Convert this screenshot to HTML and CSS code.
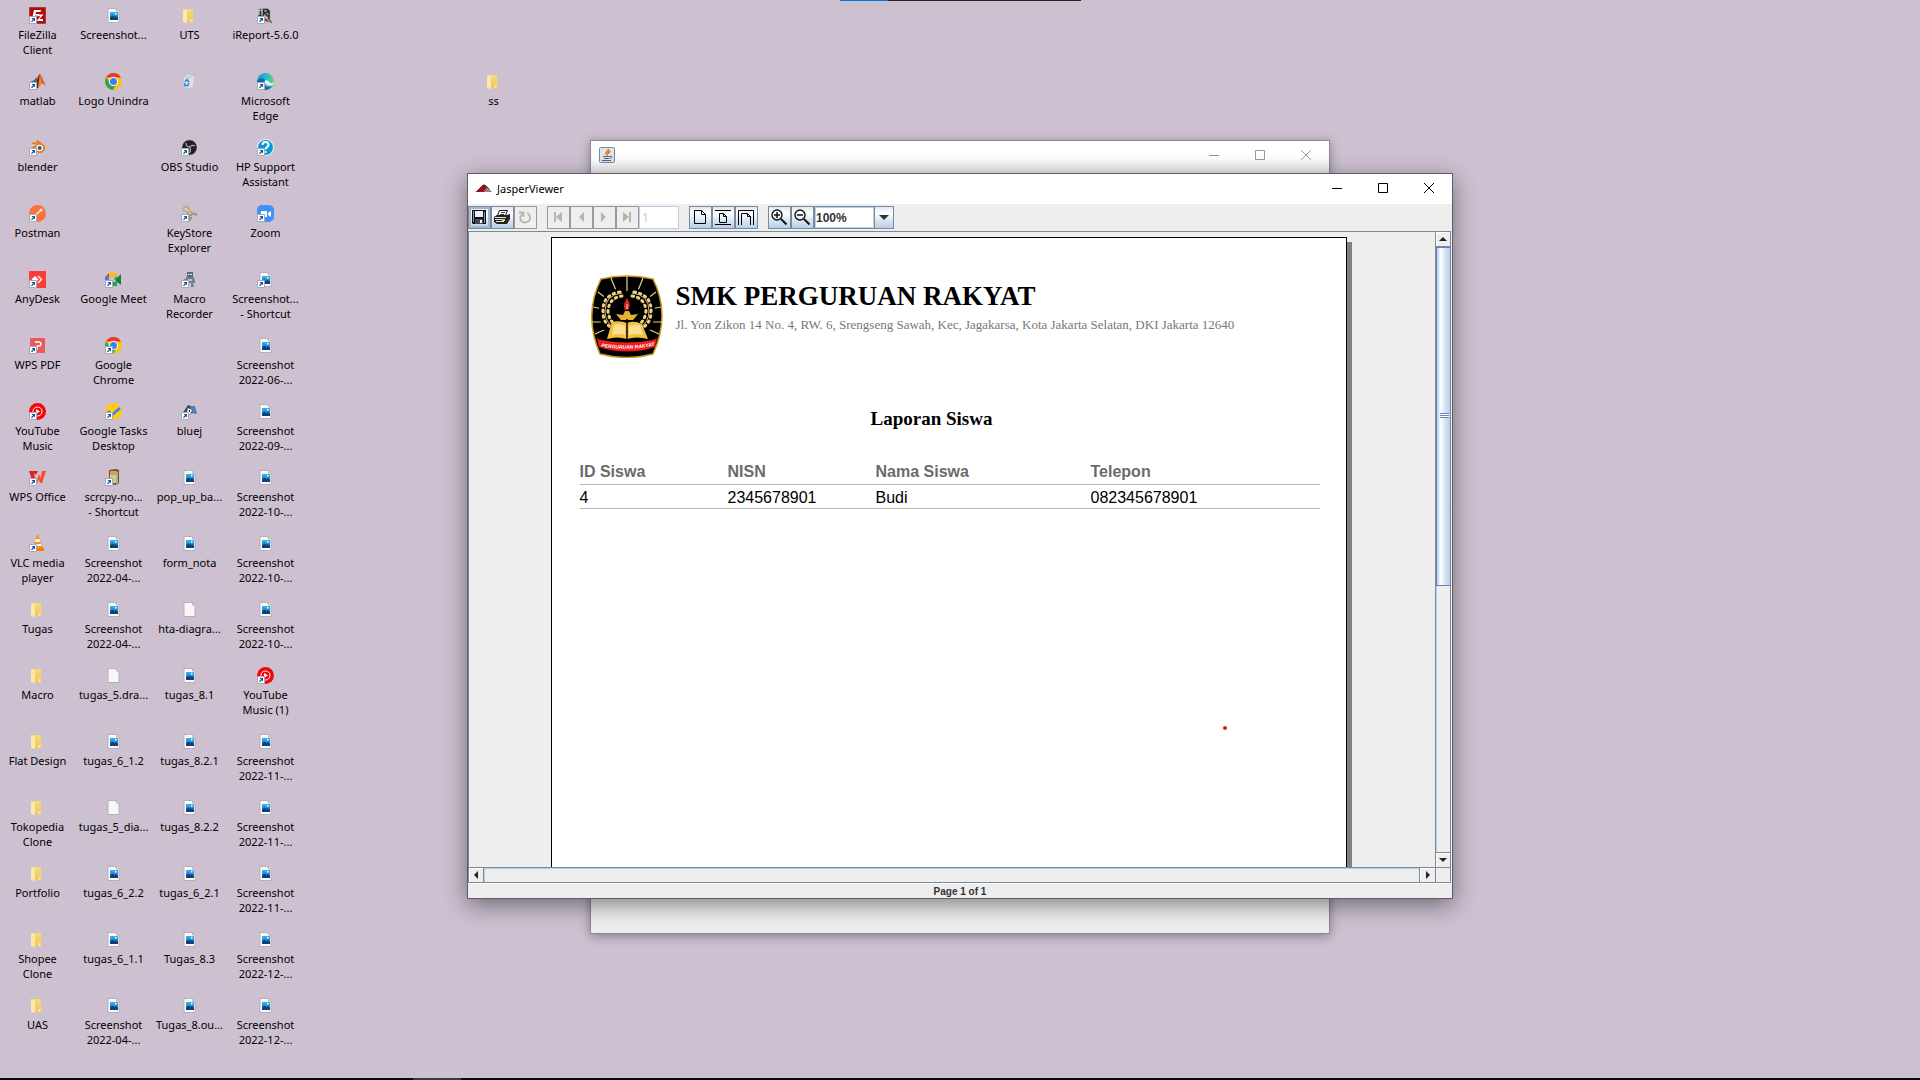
FILE: index.html
```html
<!DOCTYPE html>
<html lang="id">
<head>
<meta charset="utf-8">
<title>JasperViewer</title>
<link rel="stylesheet" href="styles.css">
</head>
<body>
<svg class="defs" aria-hidden="true">
  <defs>
    <linearGradient id="g-sky" x1="0" y1="0" x2="0" y2="1"><stop offset="0" stop-color="#35b5ef"/><stop offset="1" stop-color="#1467b8"/></linearGradient>
    <linearGradient id="g-edge" x1="0" y1="0" x2="1" y2="0"><stop offset="0" stop-color="#1b8fd8"/><stop offset=".6" stop-color="#2bbfc9"/><stop offset="1" stop-color="#6fd857"/></linearGradient>
    <linearGradient id="g-folder" x1="0" y1="0" x2="0" y2="1"><stop offset="0" stop-color="#f6d978"/><stop offset="1" stop-color="#efc863"/></linearGradient>
    <symbol id="link" viewBox="0 0 17 17"><path d="M.5 9.500h7v7h-7z" fill="#fff" stroke="#a9a9b4"/><path d="M2.500 11h3.500v3.500l-1.200-1.200-1.800 2-1-1 2-1.800z" fill="#15539e"/></symbol>
    <symbol id="image" viewBox="0 0 17 17"><path d="M3 1.500h8.500l2.500 2.500v11.500h-11z" fill="#fbfbfb" stroke="#b3b1b6"/><path d="M11.500 1.500v2.500h2.500" fill="#ddd" stroke="#b3b1b6"/><path d="M5 5h8v8H5z" fill="url(#g-sky)"/><path d="M5 10.500l2.500-2 2 1.500 1.500-1 2 2v2H5z" fill="#123f7c"/><path d="M10 6h1.500v1.500h-1.500z" fill="#fff"/></symbol>
    <symbol id="doc" viewBox="0 0 17 17"><path d="M3 1.500h8.500l2.500 2.500v11.500h-11z" fill="#f7f7f8" stroke="#b3b1b6"/><path d="M11.500 1.500v2.500h2.500" fill="#ddd" stroke="#b3b1b6"/></symbol>
    <symbol id="folder" viewBox="0 0 17 17"><path d="M4 2h8v8l1 1v4H4z" fill="url(#g-folder)"/><path d="M2 2l4 1v13l-4-1z" fill="#fde9a6"/><path d="M9.500 12h2v3h-2z" fill="#fbe7ad"/></symbol>
    <symbol id="chrome" viewBox="0 0 17 17"><circle cx="8.500" cy="8.500" r="8.500" fill="#fbc116"/><path d="M1.100 4.300A8.500 8.500 0 0 1 16 4.500H8.500z" fill="#e33b2e"/><path d="M1.100 4.300A8.500 8.500 0 0 0 8 17l4-7-7 0z" fill="#2da94f"/><circle cx="8.500" cy="8.500" r="4.500" fill="#fff"/><circle cx="8.500" cy="8.500" r="3.500" fill="#3b7ded"/></symbol>
    <symbol id="ytmusic" viewBox="0 0 17 17"><circle cx="8.500" cy="8.500" r="8.500" fill="#f60606"/><circle cx="8.500" cy="8.500" r="4.500" fill="none" stroke="#fff"/><path d="M7 6l4 2.500-4 2.500z" fill="#fff"/></symbol>
    <symbol id="filezilla" viewBox="0 0 17 17"><path d="M.5.500h16v16H.500z" fill="#b30a0a" stroke="#8c1010" stroke-dasharray="1 1"/><path d="M3 12l2-9h7l-.5 2H7l-.5 2H10l-.4 1.600H6.200L5.500 12zM8.500 7.500h6L10.500 12H14v2H7.500l4-4.700H8.200z" fill="#fff"/></symbol>
    <symbol id="matlab" viewBox="0 0 17 17"><path d="M0 10l5-3 3-3 2 5-5 6z" fill="#3477a8"/><path d="M5 14c3-2 3-11 6-13 1 0 4 9 6 12l-4-3-4 5z" fill="#d95319"/><path d="M5 14c3-2 3-11 6-13-1 4 0 9-2 14z" fill="#7b2418"/><path d="M11 1l2 9-4 5z" fill="#ef8a2c"/></symbol>
    <symbol id="blender" viewBox="0 0 17 17"><path d="M1 10l7-5H3V3.500h6L7 2l1.500-1L15 6a5 5 0 1 1-9 3l-3.500 3z" fill="#ea7a12"/><circle cx="10.700" cy="9" r="3.300" fill="#fff"/><circle cx="10.700" cy="9" r="2" fill="#235a94"/></symbol>
    <symbol id="postman" viewBox="0 0 17 17"><circle cx="8.500" cy="8.500" r="8.500" fill="#ff7039"/><path d="M4 13l1-3 6-5 1 1-5 5z" fill="#ffd9c8"/><circle cx="12" cy="5" r="1.500" fill="#fff"/></symbol>
    <symbol id="anydesk" viewBox="0 0 17 17"><path d="M0 0h17v17H0z" fill="#fb3d34"/><path d="M6 5l3.500 3.500L6 12 2.500 8.500z" fill="#fff"/><path d="M9 5l3.500 3.500L9 12" fill="none" stroke="#fff" stroke-width="1.300"/></symbol>
    <symbol id="wpspdf" viewBox="0 0 17 17"><rect x="1" y="1" width="15" height="15" rx="1" fill="#ea5a5c"/><path d="M6 5h4a2 2 0 0 1 0 4H8v4" fill="none" stroke="#fff" stroke-width="1.300"/></symbol>
    <symbol id="wps" viewBox="0 0 17 17"><path d="M0 2h9l-2 4-2-2 2 10H4z" fill="#e0251d"/><path d="M7 14l3-9 1.500 4L13 2h4l-4 12h-2l-1.500-4L8.500 14z" fill="#ff4b26"/></symbol>
    <symbol id="vlc" viewBox="0 0 17 17"><path d="M3 12h11l1.500 4h-14z" fill="#f57c00"/><path d="M7.500 0h2L13 13H4z" fill="#f7941e"/><path d="M6.700 4h3.700l.8 3H5.900zM5.200 9h6.600l.5 2H4.600z" fill="#f3f3f3"/></symbol>
    <symbol id="meet" viewBox="0 0 17 17"><path d="M4 2h8v4H4z" fill="#fbbc05"/><path d="M4 2v4H0z" fill="#ea4335"/><path d="M0 6h4v5H0z" fill="#3082f5"/><path d="M4 11h8v4H4zM9 8l3-3v7z" fill="#17a846"/><path d="M12 7l4-4v11l-4-3z" fill="#128039"/></symbol>
    <symbol id="tasks" viewBox="0 0 17 17"><circle cx="8.500" cy="8.500" r="8.500" fill="#fdca16"/><path d="M3 8l4 4 8-7" fill="none" stroke="#3d7ff0" stroke-width="2.500"/></symbol>
    <symbol id="scrcpy" viewBox="0 0 17 17"><path d="M4 1l7-1 3 1v13l-3 2-7-1z" fill="#6f5339"/><path d="M5 2h6v12H5z" fill="#b8d6a4"/><path d="M5 2h6v4H5z" fill="#e59a54"/><path d="M11 2l2 1v11l-2 1z" fill="#c4a977"/></symbol>
    <symbol id="recycle" viewBox="0 0 17 17"><path d="M2 3l5-2 7 1-1.500 12-5 2-4-1.500z" fill="#dcdfe4" stroke="#b4b9c1" stroke-width=".6"/><path d="M2 3l5 1.500L14 2M7 4.500L8 15" fill="none" stroke="#b4b9c1" stroke-width=".7"/><path d="M4 9l2-2.500L8 9M8 10l-1.500 2.500H4L3.500 10" fill="none" stroke="#1f83d6" stroke-width="1.300"/></symbol>
    <symbol id="obs" viewBox="0 0 17 17"><circle cx="8.500" cy="8.500" r="7.700" fill="#202124" stroke="#dad5de" stroke-width=".6"/><path d="M5 4c0 4 3 4 4 4M14 7c-4-2-5 1-5 2M7 14c4-1 2-4 2-5" fill="none" stroke="#a7a7ad" stroke-width="1.300"/></symbol>
    <symbol id="keystore" viewBox="0 0 17 17"><circle cx="5" cy="4" r="2.500" fill="none" stroke="#b5aea6" stroke-width="2"/><path d="M7 6l9 4M7 6l2 10M11 8l-1 3M9 13h2" stroke="#9a8f80" stroke-width="2"/><path d="M7 6l5 2M6 2l3 2" stroke="#e3ab38" stroke-width="1.500"/><path d="M4 3l3 3 3 3" stroke="#e8e6e4" fill="none"/></symbol>
    <symbol id="robot" viewBox="0 0 17 17"><path d="M6 1h6v5H6z" fill="#5a6a78"/><path d="M7 3h1.500v1H7zM9.500 3H11v1H9.500z" fill="#fff"/><path d="M5 6h8v6H5zM3 8h2v5H3zM13 8h1v4h-1zM6 12h2v4H5zM10 12h2l1 4h-3z" fill="#70808c"/><path d="M7 8h4v2H7z" fill="#a9c5d6"/></symbol>
    <symbol id="bluej" viewBox="0 0 17 17"><path d="M1 11L7 2l6 2-3 4 6 3-5-1-5 4z" fill="#3c4c60"/><path d="M9 3h5l2 8-5-2z" fill="#4f7fae"/><path d="M7 5l4 2-2 5-3-3z" fill="#e8eef2"/><path d="M8 7h1v2H8z" fill="#222"/></symbol>
    <symbol id="ireport" viewBox="0 0 17 17"><path d="M1 1h11l2 3v12H3L1 13z" fill="#bcb9bc"/><path d="M3.500 4v5M3.500 2v1M6.500 9V2.500h4v3H7l4 4M1 9h4M12 3v9" fill="none" stroke="#2b2a2c" stroke-width="1.500"/><path d="M8 11l5 4-5-1z" fill="#a3201d"/><path d="M11 11l4 5" stroke="#333"/></symbol>
    <symbol id="edge" viewBox="0 0 17 17"><circle cx="8.500" cy="8.500" r="8.500" fill="url(#g-edge)"/><path d="M0 8c3-4 8-3 8 0-2 2-1 5 2 6 3 0 4-1 5-1-3 5-11 6-14 0z" fill="#1767b5"/><path d="M8 8c0-1 3-1 4 1 2 2 4 1 5 0 0 3-4 5-7 3-2-1-3-3-2-4z" fill="#e4eff1"/></symbol>
    <symbol id="hp" viewBox="0 0 17 17"><circle cx="8.500" cy="8.500" r="8" fill="#0a96d7" stroke="#fff"/><path d="M5.500 6c0-4 6-4 6 0 0 2-3 2-3 4.500M8.500 12v2" fill="none" stroke="#fff" stroke-width="2"/></symbol>
    <symbol id="zoom" viewBox="0 0 17 17"><rect width="17" height="17" rx="5" fill="#4490fb"/><path d="M4 6h6v6H4zM11 8l3-2v6l-3-2z" fill="#fff"/></symbol>
    <symbol id="win-min" viewBox="0 0 10 10"><path d="M0 5.500h10" stroke="currentColor"/></symbol>
    <symbol id="win-max" viewBox="0 0 10 10"><path d="M.5.500h9v9h-9z" fill="none" stroke="currentColor"/></symbol>
    <symbol id="win-close" viewBox="0 0 10 10"><path d="M0 0l10 10M10 0L0 10" stroke="currentColor"/></symbol>
  </defs>
</svg>

<main class="desktop">
  <div class="icons">
    <ul class="column">
      <li><a href="#"><svg><use href="#filezilla"/><use href="#link"/></svg>FileZilla<br>Client</a></li>
      <li><a href="#"><svg><use href="#matlab"/><use href="#link"/></svg>matlab</a></li>
      <li><a href="#"><svg><use href="#blender"/><use href="#link"/></svg>blender</a></li>
      <li><a href="#"><svg><use href="#postman"/><use href="#link"/></svg>Postman</a></li>
      <li><a href="#"><svg><use href="#anydesk"/><use href="#link"/></svg>AnyDesk</a></li>
      <li><a href="#"><svg><use href="#wpspdf"/><use href="#link"/></svg>WPS PDF</a></li>
      <li><a href="#"><svg><use href="#ytmusic"/><use href="#link"/></svg>YouTube<br>Music</a></li>
      <li><a href="#"><svg><use href="#wps"/><use href="#link"/></svg>WPS Office</a></li>
      <li><a href="#"><svg><use href="#vlc"/><use href="#link"/></svg>VLC media<br>player</a></li>
      <li><a href="#"><svg><use href="#folder"/></svg>Tugas</a></li>
      <li><a href="#"><svg><use href="#folder"/></svg>Macro</a></li>
      <li><a href="#"><svg><use href="#folder"/></svg>Flat Design</a></li>
      <li><a href="#"><svg><use href="#folder"/></svg>Tokopedia<br>Clone</a></li>
      <li><a href="#"><svg><use href="#folder"/></svg>Portfolio</a></li>
      <li><a href="#"><svg><use href="#folder"/></svg>Shopee<br>Clone</a></li>
      <li><a href="#"><svg><use href="#folder"/></svg>UAS</a></li>
    </ul>
    <ul class="column">
      <li><a href="#"><svg><use href="#image"/></svg>Screenshot...</a></li>
      <li><a href="#"><svg><use href="#chrome"/></svg>Logo Unindra</a></li>
      <li></li>
      <li></li>
      <li><a href="#"><svg><use href="#meet"/><use href="#link"/></svg>Google Meet</a></li>
      <li><a href="#"><svg><use href="#chrome"/><use href="#link"/></svg>Google<br>Chrome</a></li>
      <li><a href="#"><svg><use href="#tasks"/><use href="#link"/></svg>Google Tasks<br>Desktop</a></li>
      <li><a href="#"><svg><use href="#scrcpy"/><use href="#link"/></svg>scrcpy-no...<br>- Shortcut</a></li>
      <li><a href="#"><svg><use href="#image"/></svg>Screenshot<br>2022-04-...</a></li>
      <li><a href="#"><svg><use href="#image"/></svg>Screenshot<br>2022-04-...</a></li>
      <li><a href="#"><svg><use href="#doc"/></svg>tugas_5.dra...</a></li>
      <li><a href="#"><svg><use href="#image"/></svg>tugas_6_1.2</a></li>
      <li><a href="#"><svg><use href="#doc"/></svg>tugas_5_dia...</a></li>
      <li><a href="#"><svg><use href="#image"/></svg>tugas_6_2.2</a></li>
      <li><a href="#"><svg><use href="#image"/></svg>tugas_6_1.1</a></li>
      <li><a href="#"><svg><use href="#image"/></svg>Screenshot<br>2022-04-...</a></li>
    </ul>
    <ul class="column">
      <li><a href="#"><svg><use href="#folder"/></svg>UTS</a></li>
      <li><a href="#" aria-label="Recycle Bin"><svg><use href="#recycle"/></svg></a></li>
      <li><a href="#"><svg><use href="#obs"/><use href="#link"/></svg>OBS Studio</a></li>
      <li><a href="#"><svg><use href="#keystore"/><use href="#link"/></svg>KeyStore<br>Explorer</a></li>
      <li><a href="#"><svg><use href="#robot"/><use href="#link"/></svg>Macro<br>Recorder</a></li>
      <li></li>
      <li><a href="#"><svg><use href="#bluej"/><use href="#link"/></svg>bluej</a></li>
      <li><a href="#"><svg><use href="#image"/></svg>pop_up_ba...</a></li>
      <li><a href="#"><svg><use href="#image"/></svg>form_nota</a></li>
      <li><a href="#"><svg><use href="#doc"/></svg>hta-diagra...</a></li>
      <li><a href="#"><svg><use href="#image"/></svg>tugas_8.1</a></li>
      <li><a href="#"><svg><use href="#image"/></svg>tugas_8.2.1</a></li>
      <li><a href="#"><svg><use href="#image"/></svg>tugas_8.2.2</a></li>
      <li><a href="#"><svg><use href="#image"/></svg>tugas_6_2.1</a></li>
      <li><a href="#"><svg><use href="#image"/></svg>Tugas_8.3</a></li>
      <li><a href="#"><svg><use href="#image"/></svg>Tugas_8.ou...</a></li>
    </ul>
    <ul class="column">
      <li><a href="#"><svg><use href="#ireport"/><use href="#link"/></svg>iReport-5.6.0</a></li>
      <li><a href="#"><svg><use href="#edge"/><use href="#link"/></svg>Microsoft<br>Edge</a></li>
      <li><a href="#"><svg><use href="#hp"/><use href="#link"/></svg>HP Support<br>Assistant</a></li>
      <li><a href="#"><svg><use href="#zoom"/><use href="#link"/></svg>Zoom</a></li>
      <li><a href="#"><svg><use href="#image"/><use href="#link"/></svg>Screenshot...<br>- Shortcut</a></li>
      <li><a href="#"><svg><use href="#image"/></svg>Screenshot<br>2022-06-...</a></li>
      <li><a href="#"><svg><use href="#image"/></svg>Screenshot<br>2022-09-...</a></li>
      <li><a href="#"><svg><use href="#image"/></svg>Screenshot<br>2022-10-...</a></li>
      <li><a href="#"><svg><use href="#image"/></svg>Screenshot<br>2022-10-...</a></li>
      <li><a href="#"><svg><use href="#image"/></svg>Screenshot<br>2022-10-...</a></li>
      <li><a href="#"><svg><use href="#ytmusic"/><use href="#link"/></svg>YouTube<br>Music (1)</a></li>
      <li><a href="#"><svg><use href="#image"/></svg>Screenshot<br>2022-11-...</a></li>
      <li><a href="#"><svg><use href="#image"/></svg>Screenshot<br>2022-11-...</a></li>
      <li><a href="#"><svg><use href="#image"/></svg>Screenshot<br>2022-11-...</a></li>
      <li><a href="#"><svg><use href="#image"/></svg>Screenshot<br>2022-12-...</a></li>
      <li><a href="#"><svg><use href="#image"/></svg>Screenshot<br>2022-12-...</a></li>
    </ul>
    <ul class="column column-far">
      <li></li>
      <li><a href="#"><svg><use href="#folder"/></svg>ss</a></li>
    </ul>
  </div>

  <div class="top-strip"><span></span></div>

  <section class="window window-back" aria-label="Java">
    <header class="titlebar">
      <svg class="app-icon" width="16" height="16" viewBox="0 0 16 16"><rect x=".5" y=".5" width="15" height="15" rx="1" fill="#dfe5ea" stroke="#6f8ba4"/><path d="M8 8c-4-3 2-3 1-6 3 3-2 3-1 6zM9 7c0-1 2-1 2-3" fill="none" stroke="#e8792b" stroke-width="1.200"/><path d="M4 9.500h7M5 11.500h5M3 13.500h9M11 9.500c3-1 2 2 0 2" fill="none" stroke="#43678c"/></svg>
      <span class="title"></span>
      <button aria-label="Minimize"><svg><use href="#win-min"/></svg></button>
      <button aria-label="Maximize"><svg><use href="#win-max"/></svg></button>
      <button aria-label="Close"><svg><use href="#win-close"/></svg></button>
    </header>
  </section>

  <section class="window window-front" aria-label="JasperViewer">
    <header class="titlebar">
      <svg class="app-icon" width="16" height="16" viewBox="0 0 16 16"><path d="M8 12l3-6 5 6z" fill="#8a8a8d"/><path d="M0 12l5-5 2-2h2l2 2-3 5z" fill="#9c0f16"/><path d="M0 12l7-7h2l4 4" fill="none" stroke="#300" stroke-width=".6"/></svg>
      <span class="title">JasperViewer</span>
      <button aria-label="Minimize"><svg><use href="#win-min"/></svg></button>
      <button aria-label="Maximize"><svg><use href="#win-max"/></svg></button>
      <button aria-label="Close"><svg><use href="#win-close"/></svg></button>
    </header>

    <div class="toolbar">
      <div class="group">
        <button class="tool focused" aria-label="Save"><svg viewBox="0 0 16 16"><path d="M1 1h14v14H2l-1-1z" fill="#111"/><path d="M4 2h8v6H4z" fill="#e6eef6"/><path d="M2 2h1v11H2zM13 3h1v11h-1z" fill="#8494a6"/><path d="M4 10h8v5H4z" fill="#444b55"/><path d="M9 11h2v3H9z" fill="#fff"/></svg></button>
        <button class="tool" aria-label="Print"><svg viewBox="0 0 16 16"><path d="M5.500 1.500h8l-2 5h-8z" fill="#fff" stroke="#111"/><path d="M7 3.500h4M6 5.500h4" stroke="#333"/><path d="M0 8l3-2h10l3-1v5l-3 5H3l-3-2z" fill="#222"/><path d="M1 8.500h11M1 10.500h10M2 12.500h8" stroke="#e4e4e4"/><path d="M8 11h3" stroke="#e6d51a" stroke-width="2"/></svg></button>
        <button class="tool" disabled aria-label="Reload"><svg viewBox="0 0 16 16"><path d="M2 3.500h4.500V8M5.500 5C0 10 6 15 10 13c5-2 3-8 0-9" fill="none" stroke="#b5b5b5" stroke-width="1.800"/></svg></button>
      </div>
      <div class="group">
        <button class="tool" disabled aria-label="First page"><svg viewBox="0 0 16 16"><path d="M4 3h2v10H4zM12 3v10L6 8z" fill="#b3b3b3"/></svg></button>
        <button class="tool" disabled aria-label="Previous page"><svg viewBox="0 0 16 16"><path d="M11 3v10L6 8z" fill="#b3b3b3"/></svg></button>
        <button class="tool" disabled aria-label="Next page"><svg viewBox="0 0 16 16"><path d="M5 3v10l5-5z" fill="#b3b3b3"/></svg></button>
        <button class="tool" disabled aria-label="Last page"><svg viewBox="0 0 16 16"><path d="M4 3v10l6-5zM10 3h2v10h-2z" fill="#b3b3b3"/></svg></button>
        <input class="page-no" type="text" value="1" aria-label="Page number" disabled>
      </div>
      <div class="group">
        <button class="tool" aria-label="Actual size"><svg viewBox="0 0 16 16"><path d="M2.500 1.500h7l4 4v9h-11zM9.500 1.500v4h4" fill="none" stroke="#000"/></svg></button>
        <button class="tool" aria-label="Fit page"><svg viewBox="0 0 16 16"><path d="M0 1.500h16M0 15.500h16M4.500 4.500h4l3 3v6h-7zM8.500 4.500v3h3" fill="none" stroke="#000"/></svg></button>
        <button class="tool" aria-label="Fit width"><svg viewBox="0 0 16 16"><path d="M.5 16V1.500h15V16M3.500 16V4.500h6l3 3V16M9.500 4.500v3h3" fill="none" stroke="#000"/></svg></button>
      </div>
      <div class="group">
        <button class="tool" aria-label="Zoom in"><svg viewBox="0 0 16 16"><circle cx="6" cy="6" r="5" fill="none" stroke="#111" stroke-width="1.400"/><path d="M3 6h6M6 3v6" stroke="#111" stroke-width="1.500"/><path d="M10 10l5.500 5.500" stroke="#111" stroke-width="2"/></svg></button>
        <button class="tool" aria-label="Zoom out"><svg viewBox="0 0 16 16"><circle cx="6" cy="6" r="5" fill="none" stroke="#111" stroke-width="1.400"/><path d="M3 6h6" stroke="#111" stroke-width="1.500"/><path d="M10 10l5.500 5.500" stroke="#111" stroke-width="2"/></svg></button>
        <div class="zoom-box">
          <input type="text" value="100%" aria-label="Zoom">
          <button aria-label="Zoom levels"><svg width="10" height="5" viewBox="0 0 10 5"><path d="M0 0h10L5 5z" fill="#333"/></svg></button>
        </div>
      </div>
    </div>

    <div class="viewer">
      <div class="canvas">
        <article class="sheet">
          <div class="letterhead">
            <svg class="school-logo" width="72" height="83" viewBox="0 0 72 83">
              <path d="M10 4Q36-2 62 4Q80 40 62 79Q36 86 9 79Q-8 40 10 4z" fill="#000" stroke="#c79a16" stroke-width="1.500"/>
              <path d="M36 1v15M20 3l6 15M52 3l-6 15M7 17l13 10M65 17L52 27M2 32l10 2M70 32l-10 2M1 47h9M71 47h-9M4 59l9-4M68 59l-9-4" stroke="#e5cf7c" stroke-width="1.200"/>
              <path d="M30 18Q12 22 13 38Q13 48 23 53M42 18Q60 22 59 38Q59 48 49 53" fill="none" stroke="#000" stroke-width="10"/>
              <path d="M31 18Q14 20 14 36Q14 48 24 53M41 18Q58 20 58 36Q58 48 48 53" fill="none" stroke="#d9b55a"/>
              <path d="M29 17Q11 20 12 37Q12 48 21 53M43 17Q61 20 60 37Q60 48 51 53" fill="none" stroke="#eed084" stroke-width="3" stroke-linecap="round" stroke-dasharray="1.500 4"/>
              <path d="M31 21Q18 23 17 36Q18 46 25 50M41 21Q54 23 55 36Q54 46 47 50" fill="none" stroke="#eed084" stroke-width="3" stroke-linecap="round" stroke-dasharray="1.500 4"/>
              <path d="M36 23q5 8 1 12h-3q-3-4 2-12z" fill="#d9261c"/><path d="M36 29v5" stroke="#fff" stroke-width=".8"/>
              <path d="M34 36h4l2 4 7-1-5 6H30l-5-6 7 1z" fill="#e3b533"/>
              <path d="M21 47q8-2 15 1q7-3 15 1l6 15q-11-3-21 0q-10-3-20 0z" fill="#f1c23c"/>
              <path d="M23 50q6-2 11 1v9q-7-2-13 0zM38 51q6-2 11-1l3 10q-7-2-14 0z" fill="#fbe093"/>
              <path d="M36 44v20" stroke="#000" stroke-width="1.500"/>
              <path d="M6 63q2 2 4 2q26 5 52 0l4-2-2 9q-28 9-56 0z" fill="#ee1c1c"/>
              <path id="ribbon" d="M7 71q29 6 60-1" fill="none"/>
              <text class="ribbon-text"><textPath href="#ribbon" startOffset="50%">PERGURUAN RAKYAT</textPath></text>
            </svg>
            <div>
              <h1>SMK PERGURUAN RAKYAT</h1>
              <p>Jl. Yon Zikon 14 No. 4, RW. 6, Srengseng Sawah, Kec, Jagakarsa, Kota Jakarta Selatan, DKI Jakarta 12640</p>
            </div>
          </div>
          <h2>Laporan Siswa</h2>
          <table>
            <colgroup><col class="c-id"><col class="c-nisn"><col class="c-name"><col></colgroup>
            <thead><tr><th>ID Siswa</th><th>NISN</th><th>Nama Siswa</th><th>Telepon</th></tr></thead>
            <tbody><tr><td>4</td><td>2345678901</td><td>Budi</td><td>082345678901</td></tr></tbody>
          </table>
        </article>
      </div>
      <div class="vscroll">
        <button aria-label="Scroll up"><svg width="8" height="4" viewBox="0 0 8 4"><path d="M0 4h8L4 0z" fill="#222"/></svg></button>
        <div class="track"><div class="thumb"></div></div>
        <button aria-label="Scroll down"><svg width="8" height="4" viewBox="0 0 8 4"><path d="M0 0h8L4 4z" fill="#222"/></svg></button>
      </div>
      <div class="hscroll">
        <button aria-label="Scroll left"><svg width="4" height="8" viewBox="0 0 4 8"><path d="M4 0v8L0 4z" fill="#222"/></svg></button>
        <div class="track"></div>
        <button aria-label="Scroll right"><svg width="4" height="8" viewBox="0 0 4 8"><path d="M0 0v8l4-4z" fill="#222"/></svg></button>
      </div>
      <div class="corner"></div>
    </div>
    <footer class="status">Page 1 of 1</footer>
  </section>

  <span class="pointer-dot"></span>
  <div class="taskbar-edge"><span></span></div>
</main>
</body>
</html>
```
FILE: styles.css
```css
* { box-sizing: border-box; }

body {
  margin: 0;
  font: 11px/15px "Noto Sans", "Open Sans", sans-serif;
  color: #000;
}

button, input { font: inherit; margin: 0; padding: 0; }
button { display: flex; align-items: center; justify-content: center; }
ul, h1, h2, p { margin: 0; padding: 0; }
.defs { position: absolute; width: 0; height: 0; }

.desktop {
  position: relative;
  min-height: 100vh;
  background: #cdc0d1;
  overflow: hidden;
}

/* Desktop icons */
.icons {
  display: grid;
  grid-template-columns: repeat(7, 75px);
  column-gap: 1px;
}
.column { list-style: none; }
.column-far { grid-column: 7; }
.column li { height: 66px; padding-top: 7px; }
.column a {
  display: block;
  color: #000;
  text-align: center;
  text-decoration: none;
  white-space: nowrap;
}
.column svg {
  display: block;
  width: 17px;
  height: 17px;
  margin: 0 auto 3px;
}

.top-strip {
  position: absolute;
  top: 0;
  left: 840px;
  width: 241px;
  height: 1px;
  background: #222;
}
.top-strip span { display: block; width: 48px; height: 1px; background: #0078d7; }

.taskbar-edge {
  position: absolute;
  left: 0;
  right: 0;
  bottom: 0;
  height: 2px;
  padding-left: 413px;
  background: #0b0a0d;
}
.taskbar-edge span { display: block; width: 48px; height: 2px; background: #3a393c; }

.pointer-dot {
  position: absolute;
  left: 1223px;
  top: 726px;
  width: 4px;
  height: 4px;
  border-radius: 2px;
  background: #d0210f;
}

/* Windows */
.window {
  position: absolute;
  display: flex;
  flex-direction: column;
  background: #eee;
}
.window-back {
  left: 590px;
  top: 140px;
  width: 740px;
  height: 794px;
  border: 1px solid #8d8891;
  box-shadow: 0 2px 10px rgba(0, 0, 0, .35);
}
.window-front {
  left: 467px;
  top: 173px;
  width: 986px;
  height: 726px;
  border: 1px solid #5f5c63;
  box-shadow: 0 6px 22px rgba(0, 0, 0, .45);
}

.titlebar {
  display: flex;
  align-items: center;
  height: 30px;
  padding: 0 0 2px 8px;
  background: #fff;
}
.window-back .titlebar {
  height: 33px;
  padding-bottom: 6px;
  background: linear-gradient(#fff 50%, #e6e6e6);
}
.title { flex: 1; margin-left: 5px; }
.titlebar button {
  width: 46px;
  height: 28px;
  border: 0;
  background: none;
  color: #000;
}
.window-back .titlebar button { color: #999; }
.titlebar button svg { width: 10px; height: 10px; }

/* Toolbar */
.toolbar {
  display: flex;
  gap: 10px;
  height: 27px;
  padding-top: 2px;
}
.group { display: flex; height: 23px; }
.tool {
  width: 23px;
  height: 23px;
  padding: 0 1px 1px 0;
  border: 1px solid #7a8a99;
  background: linear-gradient(#dde8f3, #fff 30%, #dde8f3 60%, #b8cfe5);
}
.tool svg { width: 16px; height: 16px; }
.tool:disabled { border-color: #999; background: #eee; }
.focused { box-shadow: inset 0 0 0 2px #a3b8cc; }
.page-no {
  width: 40px;
  border: 1px solid #b8cfe5;
  background: #fff;
  color: #b8cfe5;
  padding-left: 2px;
  font-size: 12px;
}
.zoom-box { display: flex; width: 80px; }
.zoom-box input {
  width: 60px;
  border: 1px solid #7a8a99;
  border-right: 0;
  padding-left: 1px;
  background: #fff;
  box-shadow: inset 0 0 0 1px #b8cfe5;
  color: #333;
  font: bold 12px "Liberation Sans", Arial, sans-serif;
}
.zoom-box button {
  width: 20px;
  border: 1px solid #7a8a99;
  background: linear-gradient(#dde8f3, #fff 30%, #dde8f3 60%, #b8cfe5);
}

/* Report viewer */
.viewer {
  flex: 1;
  min-height: 0;
  display: grid;
  grid-template-columns: 1fr 15px;
  grid-template-rows: 1fr 15px;
  margin-right: 1px;
  border: 1px solid #7a8a99;
}
.canvas { display: flex; justify-content: center; padding: 5px 7px 0 0; overflow: hidden; }
.sheet {
  width: 796px;
  height: 1124px;
  padding: 37px 26px 0 28px;
  border: 1px solid #000;
  background: #fff;
  box-shadow: 5px 5px 0 #808080;
  font-family: "Liberation Serif", "Times New Roman", serif;
}
.letterhead { display: flex; gap: 13px; padding-left: 11px; }
.school-logo { flex: none; }
.ribbon-text { font: italic bold 5px "Liberation Sans", Arial, sans-serif; fill: #fff; text-anchor: middle; }
h1 { margin-top: 5px; font-size: 27px; line-height: 32px; white-space: nowrap; }
p { margin-top: 4px; font-size: 13px; line-height: 18px; color: #777; white-space: nowrap; }
h2 { margin-top: 50px; padding-right: 36px; font-size: 19px; line-height: 22px; text-align: center; }

table {
  width: 100%;
  margin-top: 29px;
  border-collapse: collapse;
  table-layout: fixed;
  font: 16px/21px "Liberation Sans", Arial, sans-serif;
}
.c-id, .c-nisn { width: 148px; }
.c-name { width: 215px; }
th, td { padding: 0; border-bottom: 1px solid #b8b8b8; text-align: left; }
th { color: #6b6b6b; line-height: 25px; }
td { padding-top: 2px; }

/* Scroll bars */
.vscroll, .hscroll { display: flex; }
.vscroll { flex-direction: column; border-left: 1px solid #7a8a99; }
.hscroll { border-top: 1px solid #7a8a99; }
.track { flex: 1; }
.vscroll .track { border-left: 1px solid #b8cfe5; }
.hscroll .track { border-top: 1px solid #b8cfe5; border-left: 1px solid #b8cfe5; }
.vscroll button, .hscroll button {
  flex: none;
  border: 0 solid #7a8a99;
  background: #eee;
  box-shadow: inset 1px 1px 0 #fff;
}
.vscroll button { height: 15px; border-width: 0 0 1px; }
.vscroll button:last-child { border-width: 1px 0 0; }
.hscroll button { width: 15px; border-width: 0 1px 0 0; }
.hscroll button:last-child { width: 16px; border-width: 0 0 0 1px; }
.thumb {
  position: relative;
  height: 56%;
  border: 1px solid #6382bf;
  border-width: 1px 0 1px 1px;
  margin-left: -1px;
  background: linear-gradient(90deg, #b8cfe5, #fff 30%, #dde8f3 55%, #b8cfe5);
}
.thumb::after {
  content: "";
  position: absolute;
  left: 3px;
  top: calc(50% - 3px);
  width: 9px;
  height: 5px;
  background: repeating-linear-gradient(#6382bf 0 1px, #fff 1px 2px);
}
.corner { border: 1px solid #7a8a99; border-width: 1px 0 0 1px; }

.status {
  height: 15px;
  border-top: 1px solid #fff;
  color: #333;
  font: bold 10px/16px "Liberation Sans", Arial, sans-serif;
  text-align: center;
}
```
